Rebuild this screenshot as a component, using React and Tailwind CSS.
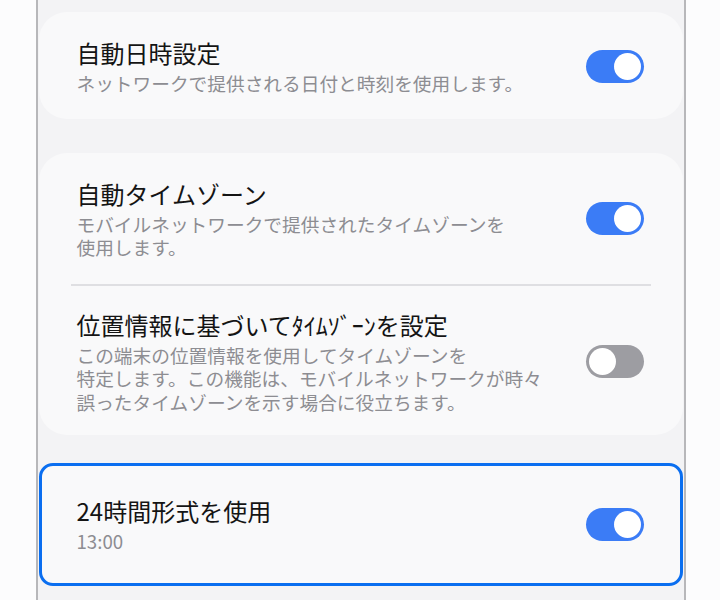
// Date & time settings screen (One UI style), Japanese locale.

function Toggle({ on }) {
    return (
        <div className={`flex items-center w-[58px] h-[33px] rounded-full p-[3px] shrink-0 ${on ? 'bg-[#3b7cf6] justify-end' : 'bg-[#9d9da2] justify-start'}`}>
            <div className="w-[27px] h-[27px] rounded-full bg-white" />
        </div>
    );
}

function Row({ title, sub, on, className }) {
    return (
        <div className={`flex items-center ${className}`}>
            <div className="flex-1 min-w-0 whitespace-nowrap">
                <div className="text-[24px] leading-[30px] text-[#141414]">{title}</div>
                <div className="mt-[3px] text-[18.7px] leading-[23.5px] text-[#8d8d92]">{sub}</div>
            </div>
            <Toggle on={on} />
        </div>
    );
}

export default function App() {
    return (
        <div className="w-[720px] h-[600px] overflow-hidden bg-[#fcfcfd] flex justify-center" style={{ fontFamily: '"Noto Sans CJK JP", "Noto Sans", sans-serif' }}>
            <div className="w-[650px] h-full ml-[1px] bg-[#f3f3f5] border-x-2 border-[#b7b7ba] px-[1px] pt-[12px] flex flex-col">
                <div className="bg-[#f9f9fa] rounded-[28px]">
                    <Row
                        className="pt-[26px] pb-[24px] pl-[38px] pr-[39px]"
                        title="自動日時設定"
                        sub="ネットワークで提供される日付と時刻を使用します。"
                        on={true}
                    />
                </div>

                <div className="mt-[34px] bg-[#f9f9fa] rounded-[28px]">
                    <Row
                        className="pt-[26px] pb-[25px] pl-[38px] pr-[39px]"
                        title="自動タイムゾーン"
                        sub={<>モバイルネットワークで提供されたタイムゾーンを<br />使用します。</>}
                        on={true}
                    />
                    <div className="mx-[32px] h-[2px] bg-[#dfdfe2]" />
                    <Row
                        className="pt-[24px] pb-[22px] pl-[38px] pr-[39px]"
                        title="位置情報に基づいてﾀｲﾑｿﾞｰﾝを設定"
                        sub={<>この端末の位置情報を使用してタイムゾーンを<br />特定します。この機能は、モバイルネットワークが時々<br />誤ったタイムゾーンを示す場合に役立ちます。</>}
                        on={false}
                    />
                </div>

                <div className="mt-[28px] bg-[#f9f9fa] rounded-[14px] border-[3px] border-[#0a6ef0]">
                    <Row
                        className="pt-[30px] pb-[30px] pl-[35px] pr-[36px]"
                        title="24時間形式を使用"
                        sub="13:00"
                        on={true}
                    />
                </div>
            </div>
        </div>
    );
}
